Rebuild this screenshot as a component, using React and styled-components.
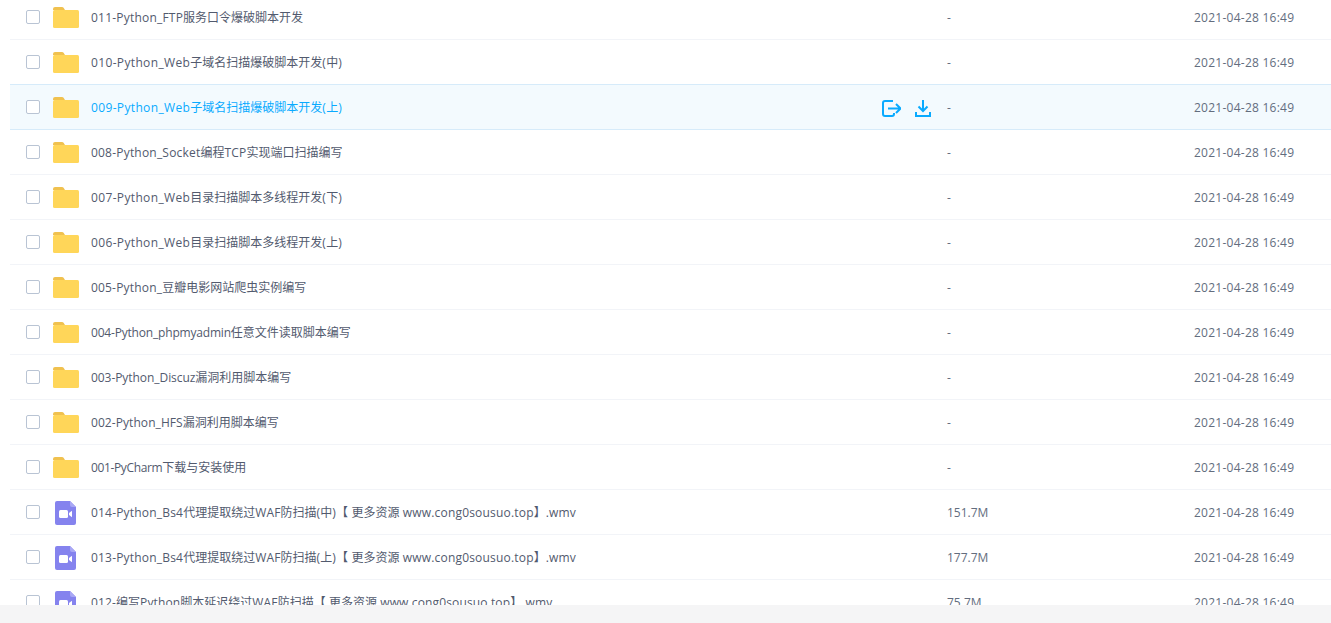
import React from 'react';
import styled, { createGlobalStyle } from 'styled-components';

const Global = createGlobalStyle`
  html, body {
    margin: 0;
    padding: 0;
    height: 100%;
    background: #f5f5f6;
    overflow: hidden;
  }
`

const Page = styled.div`
  height: 623px;
  font-family: "Open Sans", "Noto Sans CJK SC", sans-serif;
  font-size: 12px;
`

const Panel = styled.div`
  height: 605px;
  overflow: hidden;
  background: #fff;
  padding-left: 10px;
`

const List = styled.ul`
  list-style: none;
  margin: -5px 0 0;
  padding: 0;
`

const Row = styled.li`
  position: relative;
  display: flex;
  align-items: center;
  box-sizing: border-box;
  height: ${p => (p.$active ? '46px' : '45px')};
  margin-top: ${p => (p.$active ? '-1px' : '0')};
  border-top: ${p => (p.$active ? '1px solid #d6ebfa' : '0')};
  border-bottom: 1px solid ${p => (p.$active ? '#d6ebfa' : '#f2f4f8')};
  background: ${p => (p.$active ? '#f3fafe' : '#fff')};
  color: ${p => (p.$active ? '#09aaff' : '#525a6e')};
`

const Check = styled.span`
  box-sizing: border-box;
  flex: none;
  width: 14px;
  height: 14px;
  margin-left: 16px;
  border: 1px solid #b9c4d4;
  border-radius: 2px;
  background: #fff;
`

const IconSlot = styled.span`
  flex: none;
  display: flex;
  width: 26px;
  margin: 1px 0 0 13px;
`

const Name = styled.span`
  flex: none;
  width: 856px;
  margin-left: 12px;
  white-space: nowrap;
`

const Latin = styled.span`
  letter-spacing: ${p => p.$track}px;
`

const Actions = styled.span`
  position: absolute;
  left: 872px;
  top: 15px;
  display: flex;
  gap: 14px;
`

const Size = styled.span`
  flex: none;
  width: 247px;
  color: #636d7e;
`

const Time = styled.span`
  flex: none;
  color: #636d7e;
  letter-spacing: 0.25px;
`

const VideoIcon = styled.svg`
  margin-left: 2px;
`

const Folder = () => (
  <svg width="26" height="21" viewBox="0 0 26 21">
    <path d="M0 2a2 2 0 0 1 2-2h7a2 2 0 0 1 1.6.8L12 3H0z" fill="#f0c14f" />
    <rect x="0" y="3" width="26" height="18" rx="1.5" fill="#ffd659" />
  </svg>
)

const Video = () => (
  <VideoIcon width="21" height="24" viewBox="0 0 21 24">
    <path d="M2 0h13l6 6v16a2 2 0 0 1-2 2H2a2 2 0 0 1-2-2V2a2 2 0 0 1 2-2z" fill="#8583ee" />
    <path d="M15 0l6 6h-4a2 2 0 0 1-2-2z" fill="#a9a8f5" />
    <rect x="4" y="9" width="9" height="8" rx="1.5" fill="#fff" />
    <path d="M14 12l3-2.2v6.4L14 14z" fill="#fff" />
  </VideoIcon>
)

const MoveTo = () => (
  <svg width="19" height="17" viewBox="0 0 19 17" fill="none" stroke="#09aaff" strokeWidth="2">
    <path d="M11 1H3a2 2 0 0 0-2 2v11a2 2 0 0 0 2 2h7a2 2 0 0 0 2-2v-1" />
    <path d="M6 8.5h12M14 4l4.5 4.5L14 13" />
  </svg>
)

const Download = () => (
  <svg width="16" height="17" viewBox="0 0 16 17" fill="none" stroke="#09aaff" strokeWidth="2">
    <path d="M8 0v11M3.5 6.5L8 11l4.5-4.5" />
    <path d="M1 12v4h14v-4" />
  </svg>
)

const rows = [
  { name: '011-Python_FTP服务口令爆破脚本开发', size: '-', track: 0.21, folder: true },
  { name: '010-Python_Web子域名扫描爆破脚本开发(中)', size: '-', track: 0.35, folder: true },
  { name: '009-Python_Web子域名扫描爆破脚本开发(上)', size: '-', track: 0.35, folder: true, active: true },
  { name: '008-Python_Socket编程TCP实现端口扫描编写', size: '-', track: 0.2, folder: true },
  { name: '007-Python_Web目录扫描脚本多线程开发(下)', size: '-', track: 0.35, folder: true },
  { name: '006-Python_Web目录扫描脚本多线程开发(上)', size: '-', track: 0.35, folder: true },
  { name: '005-Python_豆瓣电影网站爬虫实例编写', size: '-', track: 0.18, folder: true },
  { name: '004-Python_phpmyadmin任意文件读取脚本编写', size: '-', track: -0.19, folder: true },
  { name: '003-Python_Discuz漏洞利用脚本编写', size: '-', track: -0.06, folder: true },
  { name: '002-Python_HFS漏洞利用脚本编写', size: '-', track: 0.07, folder: true },
  { name: '001-PyCharm下载与安装使用', size: '-', track: -0.36, folder: true },
  { name: '014-Python_Bs4代理提取绕过WAF防扫描(中)【 更多资源 www.cong0sousuo.top】.wmv', size: '151.7M', track: 0.19 },
  { name: '013-Python_Bs4代理提取绕过WAF防扫描(上)【 更多资源 www.cong0sousuo.top】.wmv', size: '177.7M', track: 0.19 },
  { name: '012-编写Python脚本延迟绕过WAF防扫描【 更多资源 www.cong0sousuo.top】.wmv', size: '75.7M', track: 0.14 },
]

const renderName = (name, track) =>
  name.split(/([\x20-\x7e]+)/).map((part, i) =>
    i % 2 ? <Latin key={i} $track={track}>{part}</Latin> : part
  )

function App() {
  return (
    <Page>
      <Global />
      <Panel>
        <List>
          {rows.map(r => (
            <Row key={r.name} $active={r.active}>
              <Check />
              <IconSlot>{r.folder ? <Folder /> : <Video />}</IconSlot>
              <Name>{renderName(r.name, r.track)}</Name>
              {r.active && (
                <Actions>
                  <MoveTo />
                  <Download />
                </Actions>
              )}
              <Size>{r.size}</Size>
              <Time>2021-04-28 16:49</Time>
            </Row>
          ))}
        </List>
      </Panel>
    </Page>
  )
}

export default App;
